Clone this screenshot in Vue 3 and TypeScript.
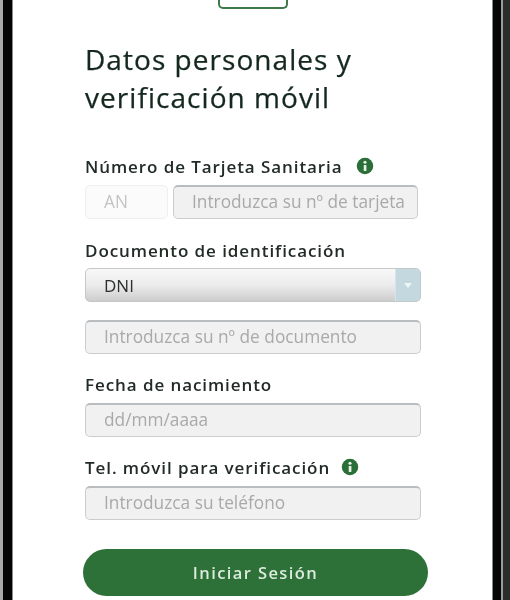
<script setup lang="ts">
const infoIcon = 'M12 1a11 11 0 1 0 0 22a11 11 0 0 0 0-22Z'
</script>

<template>
  <div class="phone">
    <div class="edge-left"></div>
    <main class="screen">
      <div class="notch"></div>
      <h1 class="title">Datos personales y<br />verificación móvil</h1>

      <div class="label first">
        <span>Número de Tarjeta Sanitaria</span>
        <svg class="info" viewBox="0 0 24 24" aria-hidden="true">
          <path :d="infoIcon" fill="#2a6f37" />
          <rect x="10.3" y="10.5" width="3.6" height="8" rx="0.6" fill="#e6f0e6" />
          <circle cx="12" cy="7" r="2.1" fill="#e6f0e6" />
        </svg>
      </div>
      <div class="card-row">
        <div class="field prefix">AN</div>
        <div class="field card">Introduzca su nº de tarjeta</div>
      </div>

      <div class="label">Documento de identificación</div>
      <div class="select">
        <span class="select-value">DNI</span>
        <span class="select-arrow"><i></i></span>
      </div>
      <div class="field wide doc">Introduzca su nº de documento</div>

      <div class="label">Fecha de nacimiento</div>
      <div class="field wide">dd/mm/aaaa</div>

      <div class="label tight">
        <span>Tel. móvil para verificación</span>
        <svg class="info" viewBox="0 0 24 24" aria-hidden="true">
          <path :d="infoIcon" fill="#2a6f37" />
          <rect x="10.3" y="10.5" width="3.6" height="8" rx="0.6" fill="#e6f0e6" />
          <circle cx="12" cy="7" r="2.1" fill="#e6f0e6" />
        </svg>
      </div>
      <div class="field wide">Introduzca su teléfono</div>

      <button class="submit" type="button">Iniciar Sesión</button>
    </main>
    <div class="edge-right"></div>
  </div>
</template>

<style scoped>
.phone {
  display: flex;
  width: 510px;
  height: 600px;
  overflow: hidden;
  background: #fff;
  font-family: "Open Sans", "Liberation Sans", sans-serif;
  filter: blur(0.6px);
}
.edge-left {
  flex: none;
  width: 13px;
  box-sizing: border-box;
  background: #050505;
  border-left: 3px solid #a9a9a9;
  border-right: 1px solid #8a8a8a;
}
.edge-right {
  flex: none;
  width: 18px;
  box-sizing: border-box;
  background: linear-gradient(90deg, #8a8a8a 0 1px, #050505 1px 9px, #9a9a9a 9px 11px, #2c2c2c 11px 100%);
}
.screen {
  flex: 1;
  min-width: 0;
  padding: 0 0 0 72px;
}
.notch {
  box-sizing: border-box;
  width: 70px;
  height: 9px;
  margin-left: 133px;
  border: 2px solid #3c7a4a;
  border-top: 0;
  border-radius: 0 0 5px 5px;
}
.title {
  margin: 31px 0 0;
  font-size: 28px;
  line-height: 38px;
  font-weight: 400;
  letter-spacing: 1.05px;
  color: #14281f;
  -webkit-text-stroke: 0.25px #14281f;
}
.label {
  display: flex;
  align-items: center;
  gap: 12px;
  height: 20px;
  margin-top: 20px;
  font-size: 17px;
  font-weight: 600;
  letter-spacing: 0.92px;
  color: #222c27;
  white-space: nowrap;
}
.label.first {
  gap: 13px;
  margin-top: 40px;
}
.label.tight {
  gap: 11px;
}
.info {
  width: 18px;
  height: 18px;
  flex: none;
}
.card-row {
  display: flex;
  gap: 5px;
  margin-top: 9px;
  margin-bottom: 21px;
}
.field {
  box-sizing: border-box;
  height: 34px;
  margin-top: 9px;
  padding: 0 0 2px 18px;
  display: flex;
  align-items: center;
  border: 1.5px solid #c9cdd0;
  border-top: 2px solid #b9bdbf;
  border-radius: 5px;
  background: #f1f1f1;
  color: #a9a9a9;
  font-size: 17.3px;
  white-space: nowrap;
  overflow: hidden;
}
.card-row .field {
  margin-top: 0;
}
.prefix {
  width: 83px;
  background: #fbfbfb;
  border: 1.5px solid #efefef;
  color: #c4c4c4;
}
.card {
  width: 245px;
}
.wide {
  width: 336px;
}
.doc {
  margin-top: 18px;
}
.select {
  display: flex;
  box-sizing: border-box;
  width: 336px;
  height: 34px;
  margin-top: 8px;
  border: 1px solid #c4c8c8;
  border-radius: 5px;
  overflow: hidden;
  background: linear-gradient(180deg, #f8f8f8 0%, #ececec 50%, #cdcdcd 100%);
}
.select-value {
  flex: 1;
  padding-left: 18px;
  line-height: 33px;
  font-size: 17px;
  color: #2b2f2d;
}
.select-arrow {
  flex: none;
  width: 24px;
  display: flex;
  align-items: center;
  justify-content: center;
  background: #c3d9df;
  border-left: 1px solid #d8e3e2;
}
.select-arrow i {
  width: 0;
  height: 0;
  border-left: 4px solid transparent;
  border-right: 4px solid transparent;
  border-top: 5px solid #eef5f6;
}
.submit {
  display: block;
  width: 345px;
  height: 47px;
  margin: 29px 0 0 -2px;
  border: 0;
  border-radius: 24px;
  background: #2d7138;
  color: #dcebdc;
  font-family: inherit;
  font-size: 16.5px;
  font-weight: 600;
  letter-spacing: 1.4px;
}
</style>

<style>
html,
body {
  margin: 0;
  background: #fff;
}
</style>
